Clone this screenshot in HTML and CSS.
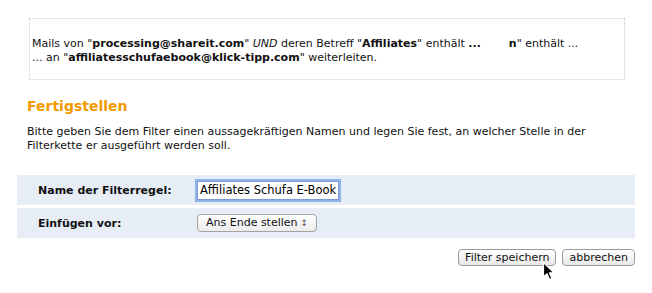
FILE: index.html
```html
<!DOCTYPE html>
<html lang="de">
<head>
    <meta charset="UTF-8">
    <title>Filter anlegen</title>
    <link rel="stylesheet" href="styles.css">
</head>
<body>
    <div class="page">
        <div class="summary">
            Mails von "<b>processing@shareit.com</b>" <i>UND</i> deren Betreff "<b>Affiliates</b>" enthält <b>...</b><span class="gap"></span><b>n</b>" enthält ...<br>
            ... an "<b>affiliatesschufaebook@klick-tipp.com</b>" weiterleiten.
        </div>

        <h2>Fertigstellen</h2>
        <p class="intro">Bitte geben Sie dem Filter einen aussagekräftigen Namen und legen Sie fest, an welcher Stelle in der Filterkette er ausgeführt werden soll.</p>

        <div class="form">
            <div class="form-row">
                <label class="label" for="name">Name der Filterregel:</label>
                <input class="text-input" id="name" type="text" value="Affiliates Schufa E-Book">
            </div>
            <div class="form-row">
                <label class="label" for="pos">Einfügen vor:</label>
                <div class="select" id="pos">Ans Ende stellen <span class="arrows">&#8597;</span></div>
            </div>
        </div>

        <div class="actions">
            <button class="btn">Filter speichern</button>
            <button class="btn">abbrechen</button>
            <div class="cursor">
                <svg width="14" height="20" viewBox="0 0 14 20">
                    <path d="M1.5 1.5 L1.5 16 L5 12.8 L7.6 18.6 L10 17.6 L7.4 11.9 L12 11.9 Z" fill="#000000" stroke="#ffffff" stroke-width="1.2" stroke-linejoin="round"/>
                </svg>
            </div>
        </div>
    </div>
</body>
</html>
```
FILE: styles.css
```css
body {
    margin: 0;
    background: #ffffff;
    font-family: "DejaVu Sans", Verdana, sans-serif;
    font-size: 11px;
    color: #111;
}

.page {
    width: 618px;
    padding: 18px 17px 30px 17px;
}

.summary {
    margin: 0 10px 0 12px;
    border: 1px dotted #c9cde0;
    padding: 18px 2px 14px 2px;
    line-height: 14px;
    white-space: nowrap;
}

.gap {
    display: inline-block;
    width: 28px;
}

h2 {
    margin: 17px 0 0 10px;
    font-size: 14px;
    line-height: 18px;
    color: #f39a00;
}

.intro {
    margin: 10px 0 0 10px;
    line-height: 14px;
    width: 590px;
}

.form {
    margin-top: 22px;
    display: flex;
    flex-direction: column;
    gap: 3px;
}

.form-row {
    display: flex;
    align-items: center;
    height: 30px;
    background: #e7edf5;
}

.label {
    width: 159px;
    padding-left: 21px;
    font-weight: bold;
}

.text-input {
    box-sizing: border-box;
    width: 142px;
    height: 19px;
    margin: 0;
    padding: 0 2px;
    border: 1px solid #7a9cd3;
    box-shadow: 0 0 0 2px #8fb4ea;
    font-family: "DejaVu Sans", sans-serif;
    font-size: 11.5px;
    color: #000;
    outline: none;
}

.select {
    box-sizing: border-box;
    width: 120px;
    height: 18px;
    padding: 0 0 0 8px;
    border: 1px solid #a3a3a3;
    border-radius: 4px;
    background: linear-gradient(#ffffff, #ececec);
    font-size: 11px;
    line-height: 16px;
    position: relative;
}

.arrows {
    position: absolute;
    right: 8px;
    top: 0;
    font-size: 9px;
    color: #555;
}

.actions {
    display: flex;
    justify-content: flex-end;
    gap: 6px;
    margin-top: 11px;
    position: relative;
}

.btn {
    height: 17px;
    padding: 0 6px;
    border: 1px solid #9a9a9a;
    border-radius: 4px;
    background: linear-gradient(#ffffff, #e9e9e9);
    font-family: "DejaVu Sans", sans-serif;
    font-size: 11px;
    color: #111;
    line-height: 15px;
}

.cursor {
    position: absolute;
    left: 525px;
    top: 12px;
    width: 14px;
    height: 20px;
    z-index: 2;
}

.cursor svg {
    display: block;
}
```
